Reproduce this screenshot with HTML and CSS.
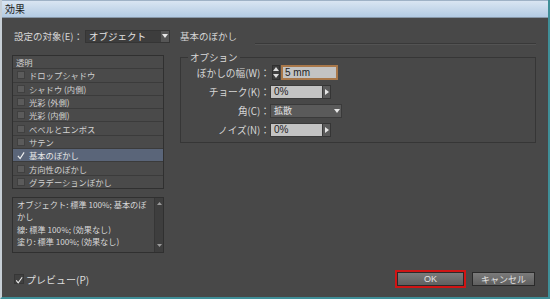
FILE: index.html
```html
<!DOCTYPE html>
<html lang="ja">
<head>
<meta charset="utf-8">
<title>効果</title>
<link rel="stylesheet" href="styles.css">
</head>
<body>
<div class="window">
  <div class="titlebar"><span class="title">効果</span></div>
  <div class="content">
    <div class="top-row">
      <span class="label">設定の対象(E)：</span>
      <div class="select target">
        <span class="select-text">オブジェクト</span>
        <span class="drop"><svg width="6" height="4" viewBox="0 0 6 4"><path d="M0 0H6L3 4Z" fill="#e8e8e8"/></svg></span>
      </div>
      <span class="heading">基本のぼかし</span>
      <div class="rule"></div>
    </div>
    <div class="main">
      <div class="left">
        <ul class="list">
          <li class="header">透明</li>
          <li><span class="cb"></span>ドロップシャドウ</li>
          <li><span class="cb"></span>シャドウ (内側)</li>
          <li><span class="cb"></span>光彩 (外側)</li>
          <li><span class="cb"></span>光彩 (内側)</li>
          <li><span class="cb"></span>ベベルとエンボス</li>
          <li><span class="cb"></span>サテン</li>
          <li class="sel"><span class="ck"><svg width="9" height="9" viewBox="0 0 9 9"><path d="M1 5L3.5 8L8 1" fill="none" stroke="#f2f2f2" stroke-width="1.3"/></svg></span>基本のぼかし</li>
          <li><span class="cb"></span>方向性のぼかし</li>
          <li><span class="cb"></span>グラデーションぼかし</li>
        </ul>
        <div class="desc">
          <div class="desc-text">オブジェクト: 標準 100%; 基本のぼ<br>かし<br>線: 標準 100%; (効果なし)<br>塗り: 標準 100%; (効果なし)</div>
          <div class="scrollbar">
            <svg width="5" height="3" viewBox="0 0 5 3"><path d="M0 3H5L2.5 0Z" fill="#9a9a9a"/></svg>
            <svg width="5" height="3" viewBox="0 0 5 3"><path d="M0 0H5L2.5 3Z" fill="#9a9a9a"/></svg>
          </div>
        </div>
      </div>
      <fieldset class="options">
        <legend>オプション</legend>
        <div class="grid">
          <span class="flabel">ぼかしの幅(W)：</span>
          <div class="ctrl">
            <span class="spin">
              <svg width="6" height="4" viewBox="0 0 6 4"><path d="M0 4H6L3 0Z" fill="#dcdcdc"/></svg>
              <svg width="6" height="4" viewBox="0 0 6 4"><path d="M0 0H6L3 4Z" fill="#dcdcdc"/></svg>
            </span>
            <span class="input focus">5 mm</span>
          </div>
          <span class="flabel">チョーク(K)：</span>
          <div class="ctrl">
            <span class="input short">0%</span>
            <span class="arrowbtn"><svg width="4" height="6" viewBox="0 0 4 6"><path d="M0 0V6L4 3Z" fill="#e6e6e6"/></svg></span>
          </div>
          <span class="flabel">角(C)：</span>
          <div class="ctrl">
            <div class="select corner">
              <span class="select-text">拡散</span>
              <span class="drop"><svg width="6" height="4" viewBox="0 0 6 4"><path d="M0 0H6L3 4Z" fill="#e8e8e8"/></svg></span>
            </div>
          </div>
          <span class="flabel">ノイズ(N)：</span>
          <div class="ctrl">
            <span class="input short">0%</span>
            <span class="arrowbtn"><svg width="4" height="6" viewBox="0 0 4 6"><path d="M0 0V6L4 3Z" fill="#e6e6e6"/></svg></span>
          </div>
        </div>
      </fieldset>
    </div>
    <div class="bottom">
      <label class="preview">
        <span class="pbox"><svg width="10" height="10" viewBox="0 0 10 10"><path d="M1.5 5.5L4 8.5L9 1.5" fill="none" stroke="#ededed" stroke-width="1.3"/></svg></span>
        <span>プレビュー(P)</span>
      </label>
      <div class="buttons">
        <div class="ok-ring"><button class="btn ok">OK</button></div>
        <button class="btn cancel">キャンセル</button>
      </div>
    </div>
  </div>
</div>
</body>
</html>
```

FILE: styles.css
```css
html, body {
  margin: 0;
  padding: 0;
  background: #ffffff;
}

body {
  font-family: "Noto Sans CJK JP", "Noto Sans", sans-serif;
  color: #d6d6d6;
}

.window {
  width: 550px;
  height: 299px;
  box-sizing: border-box;
  background: #484848;
  border-left: 2px solid #c7cfd6;
  border-right: 2px solid #3f8f98;
  border-bottom: 2px solid #3f8f98;
  display: flex;
  flex-direction: column;
}

.titlebar {
  height: 18px;
  box-sizing: border-box;
  background: linear-gradient(#d9e5f2, #b3cbe3);
  border-top: 1px solid #9fb2c6;
  border-bottom: 1px solid #8797a8;
  display: flex;
  align-items: center;
  padding-left: 3px;
}

.title {
  font-size: 10px;
  line-height: 12px;
  color: #1b1b1b;
}

.content {
  flex: 1;
  display: flex;
  flex-direction: column;
  padding: 9px 12px 9px 10px;
}

.top-row {
  height: 18px;
  display: flex;
  align-items: center;
  font-size: 9.5px;
}

.label {
  margin-left: 2px;
  white-space: nowrap;
}

.select {
  display: flex;
  align-items: center;
  box-sizing: border-box;
  background: #3d3d3d;
  border: 1px solid #353535;
  color: #e4e4e4;
}

.select-text {
  flex: 1;
  padding-left: 3px;
  white-space: nowrap;
}

.drop {
  width: 8px;
  height: 100%;
  display: flex;
  align-items: center;
  justify-content: center;
  background: #565656;
}

.target {
  width: 85px;
  height: 13px;
  margin-left: 2px;
  font-size: 9.5px;
}

.heading {
  margin-left: 10px;
  white-space: nowrap;
}

.rule {
  flex: 1;
  align-self: flex-end;
  height: 1px;
  background: #393939;
  border-bottom: 1px solid #535353;
  margin-left: 18px;
}

.main {
  margin-top: 10px;
  display: flex;
  gap: 16px;
  align-items: flex-start;
}

.left {
  width: 152px;
  display: flex;
  flex-direction: column;
}

.list {
  margin: 0;
  padding: 0;
  list-style: none;
  height: 134px;
  box-sizing: border-box;
  border: 1px solid #303030;
  background: #4a4a4a;
  display: flex;
  flex-direction: column;
}

.list li {
  flex: 1;
  display: flex;
  align-items: center;
  padding-left: 4px;
  font-size: 8.3px;
  color: #d2d2d2;
  border-bottom: 1px solid #3b3b3b;
  white-space: nowrap;
}

.list li:last-child {
  border-bottom: none;
}

.list li.header {
  padding-left: 3px;
}

.list li.sel {
  background: #5a6579;
  color: #e6e6e6;
}

.cb {
  width: 8px;
  height: 8px;
  box-sizing: border-box;
  background: #5b5b5b;
  border: 1px solid #404040;
  margin-right: 4px;
}

.ck {
  width: 8px;
  height: 9px;
  margin-right: 4px;
  display: flex;
  align-items: center;
}

.desc {
  margin-top: 8px;
  height: 56px;
  box-sizing: border-box;
  border: 1px solid #303030;
  background: #484848;
  display: flex;
}

.desc-text {
  flex: 1;
  font-size: 8.2px;
  line-height: 12.3px;
  padding: 0 0 0 4px;
  white-space: nowrap;
  color: #d8d8d8;
}

.scrollbar {
  width: 9px;
  box-sizing: border-box;
  background: #3e3e3e;
  border-left: 1px solid #363636;
  display: flex;
  flex-direction: column;
  justify-content: space-between;
  align-items: center;
  padding: 4px 0 5px;
}

.options {
  flex: 1;
  margin: -3px 0 0 0;
  padding: 3px 0 5px 0;
  border: 1px solid #363636;
  min-width: 0;
}

.options legend {
  font-size: 9.5px;
  line-height: 10px;
  margin-left: 7px;
  padding: 0 2px;
  color: #dadada;
}

.grid {
  display: grid;
  grid-template-columns: 89px auto;
  grid-auto-rows: 15px;
  row-gap: 4px;
  align-items: center;
  justify-items: start;
}

.flabel {
  justify-self: end;
  font-size: 9.7px;
  white-space: nowrap;
}

.ctrl {
  display: flex;
  align-items: center;
}

.spin {
  width: 8px;
  height: 15px;
  box-sizing: border-box;
  margin-left: 2px;
  margin-right: 1px;
  background: #3e3e3e;
  border: 1px solid #303030;
  display: flex;
  flex-direction: column;
  justify-content: space-around;
  align-items: center;
}

.input {
  display: flex;
  align-items: center;
  box-sizing: border-box;
  background: #c3c3c3;
  color: #1e1e1e;
  font-family: "Liberation Sans", "Noto Sans", sans-serif;
  font-size: 10px;
  padding-left: 3px;
  border: 1px solid #3a3a3a;
}

.input.focus {
  width: 57px;
  height: 15px;
  border: 2px solid #a9784a;
  padding-left: 2px;
}

.input.short {
  width: 53px;
  height: 14px;
}

.arrowbtn {
  width: 8px;
  height: 14px;
  box-sizing: border-box;
  background: #5a5a5a;
  border: 1px solid #353535;
  border-left: none;
  display: flex;
  align-items: center;
  justify-content: center;
}

.corner {
  width: 72px;
  height: 14px;
  background: #5a5a5a;
  border: 1px solid #3a3a3a;
  font-size: 9px;
}

.corner .drop {
  background: #5a5a5a;
}

.bottom {
  margin-top: auto;
  height: 18px;
  display: flex;
  align-items: center;
}

.preview {
  display: flex;
  align-items: center;
  margin-left: 2px;
  font-size: 10px;
  color: #dcdcdc;
}

.pbox {
  width: 10px;
  height: 10px;
  box-sizing: border-box;
  border: 1px solid #363636;
  background: #404040;
  display: flex;
  margin-right: 2px;
}

.buttons {
  margin-left: auto;
  display: flex;
  align-items: center;
}

.ok-ring {
  width: 71px;
  height: 18px;
  box-sizing: border-box;
  border: 2px solid #d01414;
  display: flex;
}

.btn {
  font-family: "Noto Sans CJK JP", "Noto Sans", sans-serif;
  font-size: 9px;
  color: #e2e2e2;
  background: linear-gradient(#7b7b7b, #5f5f5f);
  border: 1px solid #2a2a2a;
  padding: 0;
  margin: 0;
  box-sizing: border-box;
  line-height: 1;
}

.btn.ok {
  flex: 1;
  font-family: "Liberation Sans", "Noto Sans", sans-serif;
}

.btn.cancel {
  width: 63px;
  height: 14px;
  margin-left: 6px;
  margin-right: 1px;
}
```
